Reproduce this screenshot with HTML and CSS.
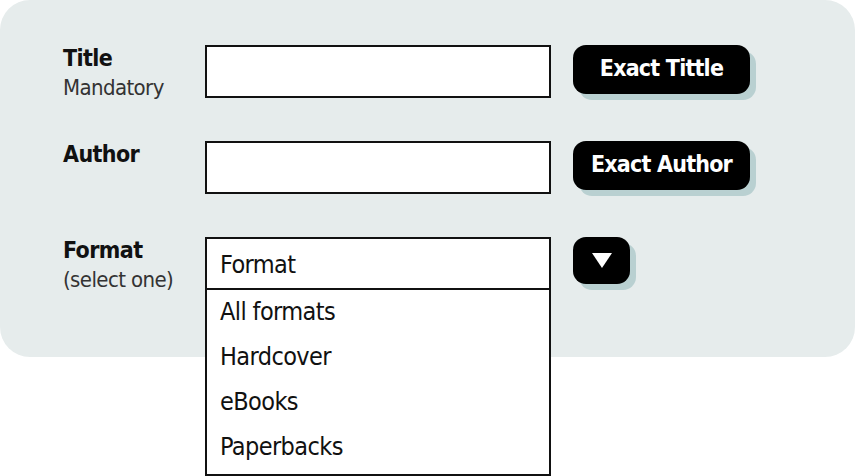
FILE: index.html
```html
<!DOCTYPE html>
<html lang="en">
<head>
    <meta charset="UTF-8">
    <title>Book Search</title>
    <link rel="stylesheet" href="styles.css">
</head>
<body>
    <div class="panel">
        <div class="row">
            <div class="label">
                <b>Title</b>
                <span>Mandatory</span>
            </div>
            <div class="field"></div>
            <button class="btn">Exact Tittle</button>
        </div>

        <div class="row">
            <div class="label">
                <b>Author</b>
            </div>
            <div class="field"></div>
            <button class="btn">Exact Author</button>
        </div>

        <div class="row">
            <div class="label">
                <b>Format</b>
                <span>(select one)</span>
            </div>
            <div class="select">
                <div class="field select-value">Format</div>
                <ul class="options">
                    <li>All formats</li>
                    <li>Hardcover</li>
                    <li>eBooks</li>
                    <li>Paperbacks</li>
                </ul>
            </div>
            <button class="btn btn-arrow">
                <svg width="20" height="15" viewBox="0 0 20 15"><polygon points="0,0 20,0 10,15" fill="#fff"/></svg>
            </button>
        </div>
    </div>
</body>
</html>
```

FILE: styles.css
```css
html {
    height: 100%;
}

body {
    margin: 0;
    min-height: 476px;
    background: #fff;
    font-family: "Liberation Sans Narrow", "DejaVu Sans Condensed", "Liberation Sans", sans-serif;
    font-stretch: condensed;
    letter-spacing: -0.6px;
    color: #111;
}

.panel {
    width: 855px;
    height: 357px;
    box-sizing: border-box;
    background: #e6ecec;
    border-radius: 30px;
    padding: 45px 0 0 63px;
    display: flex;
    flex-direction: column;
    gap: 43px;
}

.row {
    display: flex;
    align-items: flex-start;
    height: 53px;
}

.label {
    width: 142px;
    display: flex;
    flex-direction: column;
}

.label b {
    font-size: 23px;
    line-height: 26px;
}

.label span {
    font-size: 22px;
    line-height: 34px;
    color: #333;
}

.field {
    width: 346px;
    height: 53px;
    box-sizing: border-box;
    border: 2px solid #111;
    background: #fff;
}

.btn {
    margin-left: 22px;
    width: 177px;
    height: 49px;
    border: none;
    border-radius: 13px;
    background: #000;
    color: #fff;
    font-family: inherit;
    font-stretch: condensed;
    letter-spacing: -0.8px;
    font-weight: bold;
    font-size: 23px;
    padding: 0 0 4px;
    box-shadow: 6px 6px 0 #b9d0d1;
}

.btn-arrow {
    width: 57px;
    height: 47px;
    display: flex;
    align-items: center;
    justify-content: center;
    padding: 0 0 1px;
}

.select {
    position: relative;
    width: 346px;
    height: 53px;
}

.select-value {
    height: 53px;
    font-size: 25px;
    line-height: 52px;
    padding-left: 13px;
}

.options {
    position: absolute;
    top: 51px;
    left: 0;
    width: 346px;
    box-sizing: border-box;
    margin: 0;
    padding: 0 0 4px;
    list-style: none;
    background: #fff;
    border: 2px solid #111;
}

.options li {
    height: 45px;
    line-height: 44px;
    font-size: 25px;
    padding-left: 13px;
}
```
